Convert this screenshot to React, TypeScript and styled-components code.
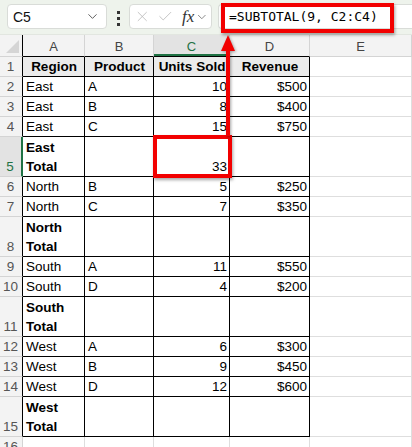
import React from 'react';
import styled, { createGlobalStyle, css } from 'styled-components';
import { Check, ChevronDown, X } from 'lucide-react';

const GlobalStyle = createGlobalStyle`
  html, body {
    margin: 0;
    padding: 0;
    background: #fff;
  }
  body {
    font-family: 'Liberation Sans', Arial, sans-serif;
  }
  * {
    box-sizing: border-box;
  }
`;

const COLS = '23px 62px 69px 76px 80px 1fr';
const EXCEL_GREEN = '#1f7244';
const GRID_GRAY = '#dedede';

const Page = styled.div`
  position: relative;
  width: 412px;
  height: 447px;
  overflow: hidden;
  background: #fff;
`;

const Toolbar = styled.div`
  display: flex;
  align-items: flex-start;
  height: 35px;
  padding: 4px 0 0 7px;
  background: #eef3ec;
  border-bottom: 1px solid #e2e6e0;
`;

const Field = styled.div`
  display: flex;
  align-items: center;
  height: 25px;
  background: #fff;
  border: 1px solid #d9dcd8;
  border-radius: 4px;
`;

const NameBox = styled(Field)`
  width: 100px;
  padding: 0 6px 0 5px;
  justify-content: space-between;
  font-size: 14px;
  color: #111;
`;

const Dots = styled.div`
  display: flex;
  flex-direction: column;
  gap: 3px;
  width: 22px;
  align-items: center;
  padding-top: 7px;
  span {
    width: 3px;
    height: 3px;
    background: #333;
  }
`;

const FxBox = styled(Field)`
  width: 83px;
  padding: 0 2px 0 4px;
  gap: 6px;
  color: #b8b8b8;
`;

const FxLabel = styled.span`
  font-family: 'Liberation Serif', 'Times New Roman', serif;
  font-style: italic;
  font-size: 17px;
  color: #333;
  margin-left: 3px;
  margin-right: -5px;
`;

const FormulaBox = styled(Field)`
  flex: 1;
  margin-left: 6px;
  border-right: none;
  border-radius: 4px 0 0 4px;
  padding-left: 10px;
  font-family: 'DejaVu Sans Mono', 'Liberation Mono', monospace;
  font-size: 13px;
  color: #000;
`;

const Row = styled.div<{ $h: number }>`
  display: grid;
  grid-template-columns: ${COLS};
  height: ${p => p.$h}px;
`;

const ColHead = styled.div<{ $selected?: boolean; $data?: boolean }>`
  display: flex;
  align-items: center;
  justify-content: center;
  background: ${p => (p.$selected ? '#e3e3e3' : '#f3f3f3')};
  border-right: 1px solid #d4d4d4;
  border-bottom: 1px solid ${p => (p.$data ? '#000' : '#d4d4d4')};
  font-size: 13px;
  color: ${p => (p.$selected ? EXCEL_GREEN : '#444')};
  padding-top: 2px;
  ${p =>
    p.$selected &&
    css`
      box-shadow: inset 0 -2px 0 ${EXCEL_GREEN};
    `}
`;

const Corner = styled.div`
  position: relative;
  background: #f3f3f3;
  border-right: 1px solid #000;
  border-bottom: 1px solid #d4d4d4;
  &::after {
    content: '';
    position: absolute;
    right: 3px;
    bottom: 3px;
    border-left: 13px solid transparent;
    border-bottom: 13px solid #d5d5d5;
  }
`;

const RowHead = styled.div<{ $selected?: boolean; $data?: boolean }>`
  display: flex;
  align-items: flex-end;
  justify-content: center;
  background: ${p => (p.$selected ? '#e3e3e3' : '#f3f3f3')};
  border-right: ${p =>
    p.$selected ? `2px solid ${EXCEL_GREEN}` : `1px solid ${p.$data ? '#000' : '#d4d4d4'}`};
  border-bottom: 1px solid #d4d4d4;
  font-size: 13.5px;
  line-height: 19px;
  color: ${p => (p.$selected ? EXCEL_GREEN : '#555')};
  padding-right: 1px;
`;

const Cell = styled.div<{ $data?: boolean; $head?: boolean; $num?: boolean; $bold?: boolean }>`
  display: flex;
  align-items: flex-end;
  justify-content: ${p => (p.$head ? 'center' : p.$num ? 'flex-end' : 'flex-start')};
  padding: 0 2px 0 3px;
  border-right: 1px solid ${p => (p.$data ? '#000' : GRID_GRAY)};
  border-bottom: 1px solid ${p => (p.$data ? '#000' : GRID_GRAY)};
  background: ${p => (p.$head ? '#ebebeb' : '#fff')};
  font-size: 13.5px;
  line-height: 19px;
  font-weight: ${p => (p.$head || p.$bold ? 700 : 400)};
  white-space: ${p => (p.$head ? 'nowrap' : 'normal')};
  color: #000;
  overflow: hidden;
`;

const TotalLabel = styled.span`
  width: min-content;
`;

const RedBox = styled.div<{ $x: number; $y: number; $w: number; $h: number }>`
  position: absolute;
  left: ${p => p.$x}px;
  top: ${p => p.$y}px;
  width: ${p => p.$w}px;
  height: ${p => p.$h}px;
  border: 4px solid #f20000;
  box-shadow: 1px 2px 3px rgba(0, 0, 0, 0.35);
  pointer-events: none;
`;

const Arrow = styled.svg`
  position: absolute;
  left: 218px;
  top: 34px;
  filter: drop-shadow(1px 1px 1.5px rgba(0, 0, 0, 0.35));
`;

type SheetRow = { n: number; h: number; cells: string[]; head?: boolean; total?: boolean };

const rows: SheetRow[] = [
  { n: 1, h: 20, head: true, cells: ['Region', 'Product', 'Units Sold', 'Revenue'] },
  { n: 2, h: 20, cells: ['East', 'A', '10', '$500'] },
  { n: 3, h: 20, cells: ['East', 'B', '8', '$400'] },
  { n: 4, h: 20, cells: ['East', 'C', '15', '$750'] },
  { n: 5, h: 40, total: true, cells: ['East Total', '', '33', ''] },
  { n: 6, h: 20, cells: ['North', 'B', '5', '$250'] },
  { n: 7, h: 20, cells: ['North', 'C', '7', '$350'] },
  { n: 8, h: 40, total: true, cells: ['North Total', '', '', ''] },
  { n: 9, h: 20, cells: ['South', 'A', '11', '$550'] },
  { n: 10, h: 20, cells: ['South', 'D', '4', '$200'] },
  { n: 11, h: 40, total: true, cells: ['South Total', '', '', ''] },
  { n: 12, h: 20, cells: ['West', 'A', '6', '$300'] },
  { n: 13, h: 20, cells: ['West', 'B', '9', '$450'] },
  { n: 14, h: 20, cells: ['West', 'D', '12', '$600'] },
  { n: 15, h: 40, total: true, cells: ['West Total', '', '', ''] },
];

const letters = ['A', 'B', 'C', 'D', 'E'];

const App = () => (
  <Page>
    <GlobalStyle />
    <Toolbar>
      <NameBox>
        <span>C5</span>
        <ChevronDown size={15} strokeWidth={1.5} color='#555' />
      </NameBox>
      <Dots>
        <span />
        <span />
        <span />
      </Dots>
      <FxBox>
        <X size={17} strokeWidth={1.2} />
        <Check size={17} strokeWidth={1.2} />
        <FxLabel>fx</FxLabel>
        <ChevronDown size={14} strokeWidth={1.5} color='#777' />
      </FxBox>
      <FormulaBox>=SUBTOTAL(9, C2:C4)</FormulaBox>
    </Toolbar>

    <Row $h={22}>
      <Corner />
      {letters.map(l => (
        <ColHead key={l} $selected={l === 'C'} $data={l !== 'E'}>
          {l}
        </ColHead>
      ))}
    </Row>

    {rows.map(r => (
      <Row key={r.n} $h={r.h}>
        <RowHead $selected={r.n === 5} $data>
          {r.n}
        </RowHead>
        {r.cells.map((c, i) => (
          <Cell key={i} $data $head={r.head} $num={i >= 2} $bold={r.total && i === 0}>
            {r.total && i === 0 ? <TotalLabel>{c}</TotalLabel> : c}
          </Cell>
        ))}
        <Cell />
      </Row>
    ))}

    <Row $h={20}>
      <RowHead>16</RowHead>
      <Cell />
      <Cell />
      <Cell />
      <Cell />
      <Cell />
    </Row>

    <RedBox $x={221} $y={3} $w={173} $h={30} />
    <RedBox $x={153} $y={135} $w={79} $h={43} />
    <Arrow width='20' height='104' viewBox='0 0 20 104'>
      <line x1='10' y1='14' x2='10' y2='102' stroke='#f20000' strokeWidth='4' />
      <polygon points='10,1 3,17 17,17' fill='#f20000' />
    </Arrow>
  </Page>
);

export default App;
